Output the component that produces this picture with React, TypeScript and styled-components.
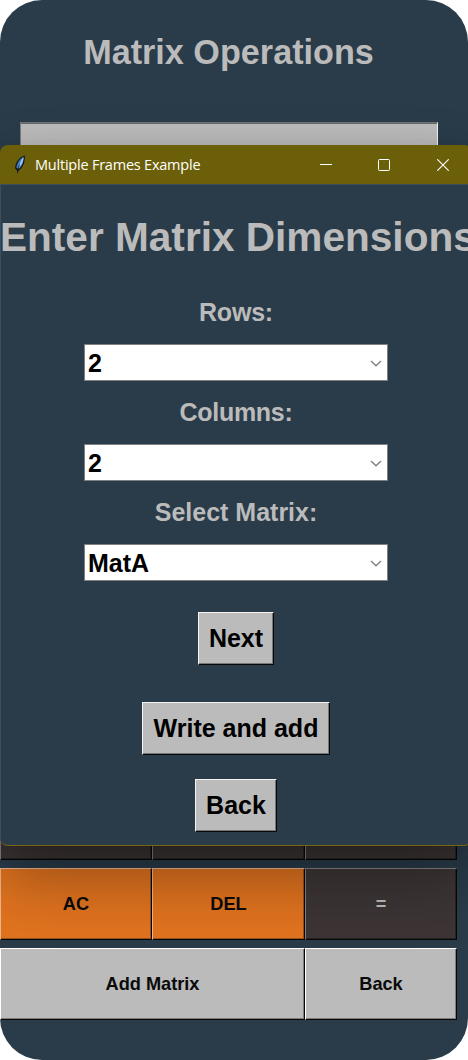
import React from 'react';
import styled, { createGlobalStyle } from 'styled-components';

const GlobalStyle = createGlobalStyle`
  * { box-sizing: border-box; }
  body { margin: 0; background: #ffffff; overflow: hidden; }
`;

const Screen = styled.main`
  position: relative;
  display: flex;
  flex-direction: column;
  width: 468px;
  height: 1060px;
  overflow: hidden;
  border-radius: 42px;
  background: #2a3c4a;
  font-family: 'Liberation Sans', Arial, sans-serif;
  font-weight: 700;
`;

const ScreenTitle = styled.h1`
  margin: 0;
  padding: 32px 11px 0 0;
  height: 122px;
  font-size: 34.2px;
  line-height: 40px;
  text-align: center;
  color: #bbbbbb;
`;

const Display = styled.div`
  width: 418px;
  height: 90px;
  margin-left: 20px;
  background: #bbbbbb;
  border: 1px solid;
  border-color: #6f7375 #f0f0f0 #f0f0f0 #7c7c7c;
  box-shadow: inset 0 1px #666a6b;
`;

const Keypad = styled.div`
  display: grid;
  grid-template-columns: 152px 153px 152px;
  grid-auto-rows: 72px;
  row-gap: 8px;
  width: 457px;
  margin-top: auto;
  margin-bottom: 40px;
`;

const tones = {
  dark: { bg: '#3d3535', fg: '#bbbbbb', light: '#858282', shade: '#282323' },
  orange: { bg: '#e0731f', fg: '#0a0a0a', light: '#f3b78d', shade: '#96501c' },
  grey: { bg: '#bbbbbb', fg: '#0a0a0a', light: '#ffffff', shade: '#7d7d7d' },
};

const Key = styled.button<{ $tone: keyof typeof tones; $span?: number }>`
  grid-column: span ${(p) => p.$span ?? 1};
  padding: 0;
  border: 1px solid;
  border-color: ${(p) => tones[p.$tone].light} #080808 #080808 ${(p) => tones[p.$tone].light};
  box-shadow: inset -1px -1px ${(p) => tones[p.$tone].shade};
  background: ${(p) => tones[p.$tone].bg};
  color: ${(p) => tones[p.$tone].fg};
  font: 700 18.2px/20px 'Liberation Sans', Arial, sans-serif;
`;

const Dialog = styled.section`
  position: absolute;
  top: 145px;
  left: 0;
  width: 472px;
  height: 701px;
  display: flex;
  flex-direction: column;
  overflow: hidden;
  border-radius: 8px;
  border-bottom: 1px solid #75660a;
  background: #2a3c4a;
  box-shadow: 0 32px 64px rgba(0, 0, 0, 0.34), 0 2px 21px rgba(0, 0, 0, 0.1);
`;

const TitleBar = styled.header`
  display: flex;
  align-items: center;
  height: 39px;
  flex: none;
  padding-left: 13px;
  background: #6c5f09;
`;

const WindowTitle = styled.span`
  flex: 1;
  padding-left: 8px;
  font: 400 14.5px/20px 'Open Sans', 'Noto Sans', sans-serif;
  letter-spacing: -0.22px;
  color: #ffffff;
`;

const WindowControls = styled.div`
  display: grid;
  grid-template-columns: 58px 59px 12px;
  align-items: center;
  padding-right: 23px;
`;

const Body = styled.div`
  display: flex;
  flex-direction: column;
  align-items: center;
  flex: 1;
  padding-right: 1px;
  border-top: 1px solid #3d4e5b;
  border-left: 1px solid #3d4e5b;
`;

const Heading = styled.h2`
  align-self: flex-start;
  margin: 28px 0 36px -1px;
  font-size: 40.6px;
  line-height: 48px;
  white-space: nowrap;
  color: #bbbbbb;
`;

const Field = styled.label<{ $spacing: number }>`
  display: flex;
  flex-direction: column;
  align-items: center;
  width: 304px;
  height: 100px;
  color: #bbbbbb;
  font-size: 25px;
  line-height: 30px;
  letter-spacing: ${(p) => p.$spacing}px;
`;

const Combo = styled.span`
  display: flex;
  align-items: center;
  justify-content: space-between;
  width: 304px;
  height: 37px;
  margin-top: 17px;
  padding: 0 5px 0 3px;
  border: 1px solid #7e8081;
  background: #ffffff;
  color: #000000;
`;

const Actions = styled.div`
  display: flex;
  flex-direction: column;
  align-items: center;
  padding-top: 15px;
`;

const Action = styled.button<{ $width: number; $gap: number }>`
  flex: none;
  width: ${(p) => p.$width}px;
  height: 53px;
  margin: 0 0 ${(p) => p.$gap}px;
  padding: 0 0 1px;
  border: 1px solid;
  border-color: #f4f4f4 #080808 #080808 #f4f4f4;
  box-shadow: inset -1px -1px #777777;
  background: #bbbbbb;
  color: #000000;
  font: 700 25px/30px 'Liberation Sans', Arial, sans-serif;
`;

const Feather = () => (
  <svg width="14" height="20" viewBox="0 0 14 20">
    <path d="M11.4 .6C7 1.8 2.2 7 2.1 13.4L3.9 15.2L4.4 19L5.7 15.4C9.6 13.2 12 8 11.9 1.2Z" fill="#15191f" />
    <path d="M10.8 1.7C7.4 3 4.1 7.5 3.4 12.6L5.4 14C8.6 12 10.7 7 10.8 1.7Z" fill="#4680c8" />
    <path d="M10.4 2.2C8 5 6.5 9 5.8 13L7 11.4C9 9 10.5 5.4 10.4 2.2Z" fill="#a9cdf0" />
    <path d="M6.6 9.5C5.6 12 5 14 4.5 17" fill="none" stroke="#15191f" strokeWidth=".8" />
  </svg>
);

const Chevron = () => (
  <svg width="12" height="8" viewBox="0 0 12 8" fill="none" stroke="#808080" strokeWidth="1.4">
    <path d="M1 1.9L6 6.7L11 1.9" />
  </svg>
);

const Select = ({ label, value, spacing = 0 }: { label: string; value: string; spacing?: number }) => (
  <Field $spacing={spacing}>
    {label}
    <Combo>
      {value}
      <Chevron />
    </Combo>
  </Field>
);

export default function App() {
  return (
    <>
      <GlobalStyle />
      <Screen>
        <ScreenTitle>Matrix Operations</ScreenTitle>
        <Display />
        <Keypad>
          <Key $tone="dark" />
          <Key $tone="dark" />
          <Key $tone="dark" />
          <Key $tone="orange">AC</Key>
          <Key $tone="orange">DEL</Key>
          <Key $tone="dark">=</Key>
          <Key $tone="grey" $span={2}>Add Matrix</Key>
          <Key $tone="grey">Back</Key>
        </Keypad>
        <Dialog>
          <TitleBar>
            <Feather />
            <WindowTitle>Multiple Frames Example</WindowTitle>
            <WindowControls>
              <svg width="12" height="12" viewBox="0 0 12 12" stroke="#ffffff">
                <path d="M0 5.5H12" />
              </svg>
              <svg width="12" height="12" viewBox="0 0 12 12" fill="none" stroke="#ffffff">
                <rect x=".5" y=".5" width="11" height="11" rx="1" />
              </svg>
              <svg width="12" height="12" viewBox="0 0 12 12" stroke="#ffffff" strokeWidth="1.1">
                <path d="M.3 .3L11.7 11.7M11.7 .3L.3 11.7" />
              </svg>
            </WindowControls>
          </TitleBar>
          <Body>
            <Heading>Enter Matrix Dimensions</Heading>
            <Select label="Rows:" value="2" spacing={-0.2} />
            <Select label="Columns:" value="2" spacing={-0.3} />
            <Select label="Select Matrix:" value="MatA" />
            <Actions>
              <Action $width={76} $gap={37}>Next</Action>
              <Action $width={188} $gap={24}>Write and add</Action>
              <Action $width={82} $gap={0}>Back</Action>
            </Actions>
          </Body>
        </Dialog>
      </Screen>
    </>
  );
}
